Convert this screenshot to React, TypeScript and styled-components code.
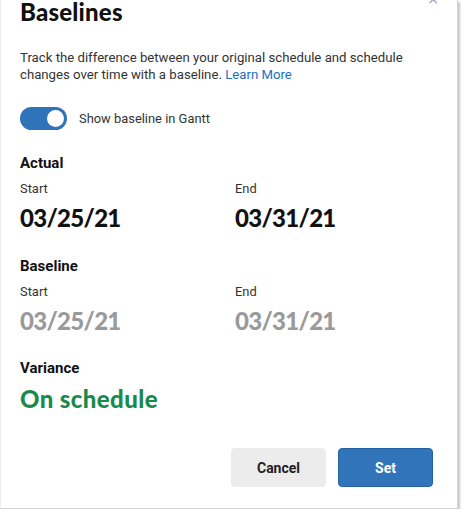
import React, { useState } from 'react'
import styled, { createGlobalStyle } from 'styled-components'

const GlobalStyle = createGlobalStyle`
  html, body {
    margin: 0;
    padding: 0;
    background: #ffffff;
  }
  body {
    font-family: Roboto, "Liberation Sans", sans-serif;
    color: #222;
  }
`

const Dialog = styled.div`
  position: relative;
  box-sizing: border-box;
  width: 458px;
  height: 509px;
  padding: 0 20px 21px 19px;
  background: #fff;
  border-left: 1px solid #ececec;
  border-right: 1px solid #d4d4d4;
  border-bottom: 1px solid #d4d4d4;
  box-shadow: 2px 2px 2px rgba(0, 0, 0, 0.22);
  display: flex;
  flex-direction: column;
`

const CloseMark = styled.span`
  position: absolute;
  top: -9px;
  right: 18px;
  font-size: 14px;
  color: #999;
  font-family: "DejaVu Sans", sans-serif;
`

const Title = styled.h1`
  margin: 0;
  font-family: Lato, "Noto Sans", sans-serif;
  font-weight: 900;
  font-size: 24px;
  line-height: 23px;
  letter-spacing: 0.2px;
  color: #111;
`

const Intro = styled.p`
  margin: 26px 0 0 0;
  font-size: 13.2px;
  line-height: 17px;
  color: #333;
`

const LearnMore = styled.a`
  color: #1a6fc0;
  text-decoration: none;
`

const ToggleRow = styled.label`
  display: flex;
  align-items: center;
  gap: 12px;
  margin-top: 24px;
  font-size: 12.9px;
  color: #333;
  cursor: pointer;
`

const Track = styled.span<{ $on: boolean }>`
  position: relative;
  box-sizing: border-box;
  width: 47px;
  height: 23px;
  border-radius: 12px;
  background: ${p => (p.$on ? '#2f73b9' : '#bbb')};
  flex-shrink: 0;
`

const Knob = styled.span<{ $on: boolean }>`
  position: absolute;
  top: 3px;
  left: ${p => (p.$on ? '27px' : '3px')};
  width: 17px;
  height: 17px;
  border-radius: 50%;
  background: #fff;
`

const Section = styled.section<{ $gap: number }>`
  margin-top: ${p => p.$gap}px;
`

const SectionTitle = styled.h2`
  margin: 0;
  font-size: 15px;
  line-height: 18px;
  font-weight: 700;
  color: #111;
`

const Grid = styled.div`
  display: grid;
  grid-template-columns: 215px 1fr;
  margin-top: 9px;
`

const FieldLabel = styled.div`
  font-size: 12.9px;
  line-height: 16px;
  color: #333;
`

const DateValue = styled.div<{ $muted?: boolean }>`
  margin-top: 7px;
  font-family: Lato, "Noto Sans", sans-serif;
  font-weight: 900;
  font-size: 24px;
  line-height: 28px;
  letter-spacing: -0.7px;
  color: ${p => (p.$muted ? '#9a9a9a' : '#111')};
`

const Status = styled.div`
  margin-top: 8px;
  font-family: Lato, "Noto Sans", sans-serif;
  font-weight: 900;
  font-size: 24px;
  line-height: 28px;
  letter-spacing: 0.4px;
  color: #1a8a4c;
`

const Footer = styled.div`
  margin-top: auto;
  display: flex;
  justify-content: flex-end;
  gap: 12px;
  padding-right: 4px;
`

const Button = styled.button<{ $primary?: boolean }>`
  width: 95px;
  height: 39px;
  border-radius: 4px;
  font-family: Roboto, "Liberation Sans", sans-serif;
  font-size: 14px;
  font-weight: 700;
  cursor: pointer;
  border: 1px solid ${p => (p.$primary ? '#2462a6' : '#ececec')};
  background: ${p => (p.$primary ? '#3174b9' : '#ececec')};
  color: ${p => (p.$primary ? '#fff' : '#222')};
`

const dates = [
  { title: 'Actual', start: '03/25/21', end: '03/31/21', muted: false, gap: 24 },
  { title: 'Baseline', start: '03/25/21', end: '03/31/21', muted: true, gap: 25 },
]

export default function App() {
  const [showBaseline, setShowBaseline] = useState(true)

  return (
    <>
      <GlobalStyle />
      <Dialog>
        <CloseMark>×</CloseMark>
        <Title>Baselines</Title>
        <Intro>
          Track the difference between your original schedule and schedule
          changes over time with a baseline. <LearnMore href="#">Learn More</LearnMore>
        </Intro>
        <ToggleRow onClick={() => setShowBaseline(!showBaseline)}>
          <Track $on={showBaseline}>
            <Knob $on={showBaseline} />
          </Track>
          Show baseline in Gantt
        </ToggleRow>
        {dates.map(d => (
          <Section key={d.title} $gap={d.gap}>
            <SectionTitle>{d.title}</SectionTitle>
            <Grid>
              <div>
                <FieldLabel>Start</FieldLabel>
                <DateValue $muted={d.muted}>{d.start}</DateValue>
              </div>
              <div>
                <FieldLabel>End</FieldLabel>
                <DateValue $muted={d.muted}>{d.end}</DateValue>
              </div>
            </Grid>
          </Section>
        ))}
        <Section $gap={24}>
          <SectionTitle>Variance</SectionTitle>
          <Status>On schedule</Status>
        </Section>
        <Footer>
          <Button>Cancel</Button>
          <Button $primary>Set</Button>
        </Footer>
      </Dialog>
    </>
  )
}
